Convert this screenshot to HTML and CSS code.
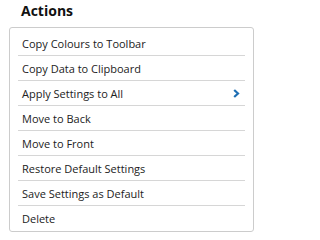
FILE: index.html
```html
<!DOCTYPE html>
<html>
<head>
<meta charset="utf-8">
<link rel="stylesheet" href="styles.css">
</head>
<body>
<div class="panel">
  <div class="title">Actions</div>
  <ul class="menu">
    <li class="item">Copy Colours to Toolbar</li>
    <li class="item">Copy Data to Clipboard</li>
    <li class="item has-sub">Apply Settings to All
      <svg class="chev" width="7" height="9" viewBox="0 0 7 9"><path d="M1.2 1 L5 4.5 L1.2 8" fill="none" stroke="#1f6fb4" stroke-width="2.2"/></svg>
    </li>
    <li class="item">Move to Back</li>
    <li class="item">Move to Front</li>
    <li class="item">Restore Default Settings</li>
    <li class="item">Save Settings as Default</li>
    <li class="item">Delete</li>
  </ul>
</div>
</body>
</html>
```
FILE: styles.css
```css
html, body {
  margin: 0;
  padding: 0;
  background: #ffffff;
}
body {
  font-family: "Open Sans", "Liberation Sans", sans-serif;
  color: #222222;
}
.panel {
  padding: 2px 9px 0 9px;
}
.title {
  font-size: 14px;
  font-weight: 700;
  line-height: 18px;
  color: #111111;
  padding-left: 12px;
  margin-bottom: 7px;
}
.menu {
  list-style: none;
  margin: 0;
  padding: 3px 8px 1px 8px;
  border: 1px solid #cccccc;
  border-radius: 3px;
  width: 227px;
}
.item {
  display: flex;
  align-items: center;
  justify-content: space-between;
  height: 24px;
  padding: 0 5px 0 4px;
  font-size: 11px;
  border-bottom: 1px solid #d6d6d6;
  color: #222222;
}
.item:last-child {
  border-bottom: none;
}
.chev {
  display: block;
}
```
